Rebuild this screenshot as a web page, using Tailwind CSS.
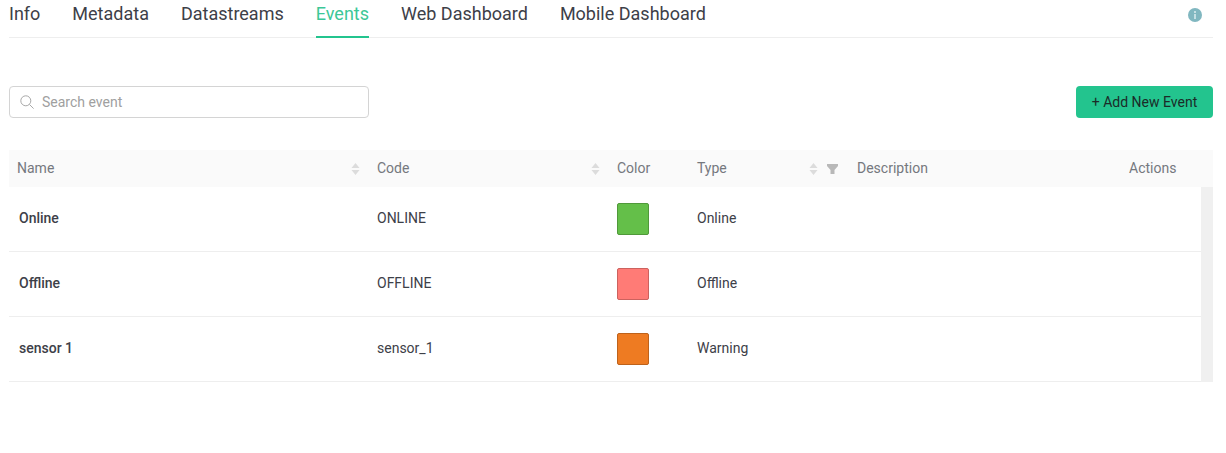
<!DOCTYPE html>
<html lang="en">
<head>
    <meta charset="UTF-8">
    <title>Events</title>
    <script src="https://cdn.jsdelivr.net/npm/@tailwindcss/browser@4"></script>
</head>
<body class="bg-white font-['Roboto',sans-serif] text-[#3d4048] h-[453px] overflow-hidden">
    <div class="pl-[9px] pr-[13px]">
        <!-- Tabs -->
        <div class="flex items-start gap-8 h-[38px] border-b border-[#eeeeee] text-lg leading-[28px] relative">
            <a class="h-[38px]">Info</a>
            <a class="h-[38px]">Metadata</a>
            <a class="h-[38px]">Datastreams</a>
            <a class="h-[38px] text-[#3cc797] border-b-2 border-[#23c48e]">Events</a>
            <a class="h-[38px]">Web Dashboard</a>
            <a class="h-[38px]">Mobile Dashboard</a>
            <svg class="absolute right-[11px] top-[8px]" width="14" height="14" viewBox="0 0 14 14">
                <circle cx="7" cy="7" r="7" fill="#80b7c0"/>
                <rect x="6" y="6" width="2" height="5" fill="#c4dfe3"/>
                <rect x="6" y="3" width="2" height="2" fill="#c4dfe3"/>
            </svg>
        </div>

        <!-- Toolbar -->
        <div class="flex justify-between mt-[48px]">
            <div class="w-[360px] h-[32px] border border-[#d4d4d4] rounded flex items-center pl-[10px] gap-[8px] text-sm text-[#a0a0a0]">
                <svg width="14" height="14" viewBox="0 0 14 14" fill="none" stroke="#a8a8a8" stroke-width="1">
                    <circle cx="5.8" cy="5.8" r="5"/>
                    <path d="M9.4 9.4l4.2 4.2"/>
                </svg>
                <span>Search event</span>
            </div>
            <button class="w-[137px] h-[32px] bg-[#23c48e] rounded text-sm text-[#1b2b28]">+ Add New Event</button>
        </div>

        <!-- Table header -->
        <div class="flex h-[37px] mt-[32px] items-center bg-[#fafafa] text-sm text-[#75787e]">
            <div class="w-[360px] pl-[8px] pr-[9px] flex justify-between items-center">
                <span class="pb-[2px]">Name</span>
                <svg width="9" height="14" viewBox="0 0 9 14" fill="#dcdcdc"><path d="M4.5 1L8.5 6H.5zM4.5 13L.5 8h8z"/></svg>
            </div>
            <div class="w-[240px] pl-[8px] pr-[9px] flex justify-between items-center">
                <span class="pb-[2px]">Code</span>
                <svg width="9" height="14" viewBox="0 0 9 14" fill="#dcdcdc"><path d="M4.5 1L8.5 6H.5zM4.5 13L.5 8h8z"/></svg>
            </div>
            <div class="w-[80px] pl-[8px] pb-[2px]">Color</div>
            <div class="w-[160px] pl-[8px] pr-[11px] flex items-center">
                <span class="flex-1 pb-[2px]">Type</span>
                <svg width="9" height="14" viewBox="0 0 9 14" fill="#dcdcdc"><path d="M4.5 1L8.5 6H.5zM4.5 13L.5 8h8z"/></svg>
                <svg class="ml-[9px]" width="11" height="10" viewBox="0 0 11 10" fill="#b8b8b8"><path d="M0 0h11v2L7.5 6v4h-4V6L0 2z"/></svg>
            </div>
            <div class="flex-1 pl-[8px] pb-[2px]">Description</div>
            <div class="w-[84px] pb-[2px]">Actions</div>
        </div>

        <!-- Table rows -->
        <div class="flex">
            <div class="flex-1 text-sm">
                <div class="flex h-[65px] items-center border-b border-[#eeeeee]">
                    <div class="w-[360px] pl-[10px] pb-[2px] font-medium">Online</div>
                    <div class="w-[240px] pl-[8px] pb-[2px]">ONLINE</div>
                    <div class="w-[80px] pl-[8px]"><div class="w-[32px] h-[32px] rounded-[2px] bg-[#64bf49] border border-[#50993a]"></div></div>
                    <div class="pl-[8px] pb-[2px]">Online</div>
                </div>
                <div class="flex h-[65px] items-center border-b border-[#eeeeee]">
                    <div class="w-[360px] pl-[10px] pb-[2px] font-medium">Offline</div>
                    <div class="w-[240px] pl-[8px] pb-[2px]">OFFLINE</div>
                    <div class="w-[80px] pl-[8px]"><div class="w-[32px] h-[32px] rounded-[2px] bg-[#ff7b76] border border-[#cc625e]"></div></div>
                    <div class="pl-[8px] pb-[2px]">Offline</div>
                </div>
                <div class="flex h-[65px] items-center border-b border-[#eeeeee]">
                    <div class="w-[360px] pl-[10px] pb-[2px] font-medium">sensor 1</div>
                    <div class="w-[240px] pl-[8px] pb-[2px]">sensor_1</div>
                    <div class="w-[80px] pl-[8px]"><div class="w-[32px] h-[32px] rounded-[2px] bg-[#ee7b22] border border-[#be621b]"></div></div>
                    <div class="pl-[8px] pb-[2px]">Warning</div>
                </div>
            </div>
            <div class="w-[12px] bg-[#f0f0f0]"></div>
        </div>
    </div>
</body>
</html>
